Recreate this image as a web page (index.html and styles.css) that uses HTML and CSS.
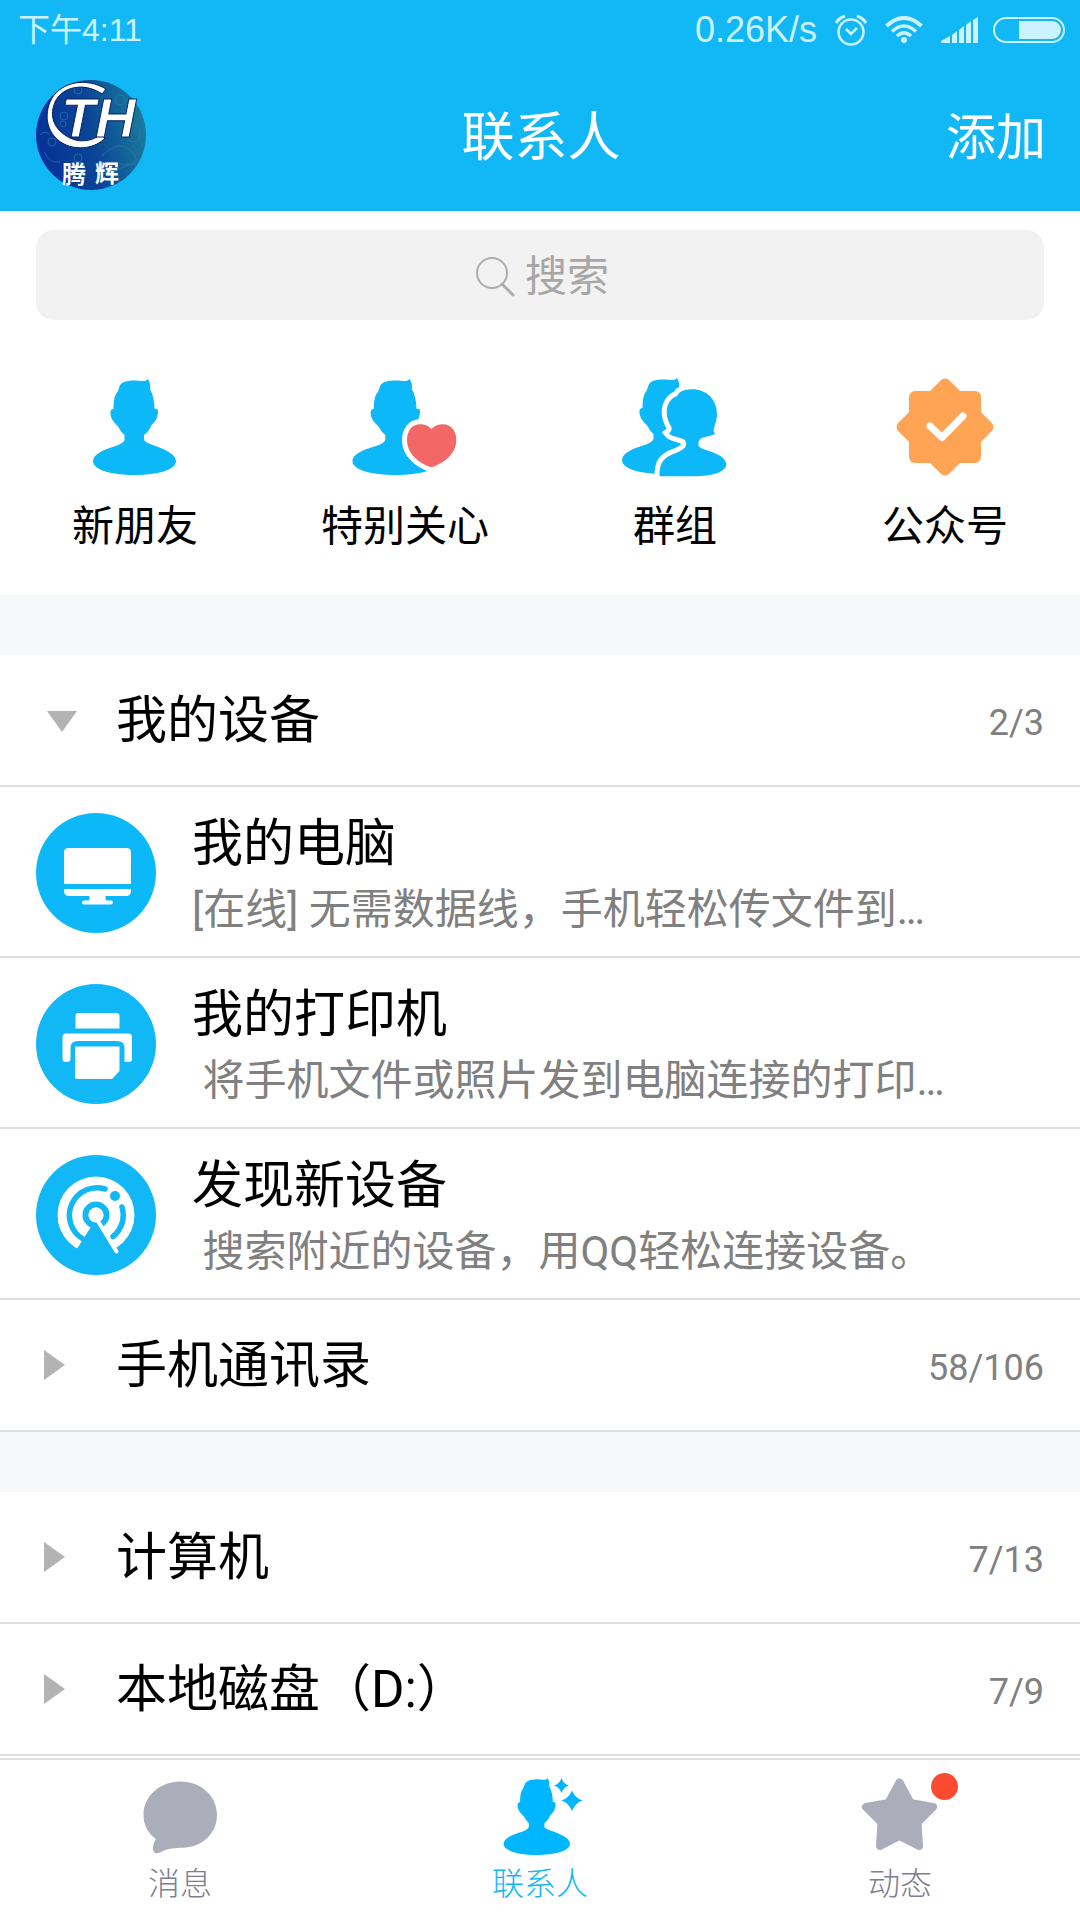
FILE: index.html
```html
<!DOCTYPE html>
<html lang="zh-CN">
<head>
  <meta charset="UTF-8" />
  <meta name="viewport" content="width=device-width, initial-scale=1.0"/>
  <title>联系人</title>
  <link rel="stylesheet" href="styles.css">
</head>
<body>
  <!-- shared shapes -->
  <svg class="defs" width="0" height="0" aria-hidden="true">
    <symbol id="person" viewBox="0 0 108 108" overflow="visible">
      <path d="M38 15C39 10 43 8 51 7.500C57 7 62 9 65 7.500L67 6C68 8 70 11 69 16.500C71 19 71 21 71.500 22C73 27 73.500 31 73.500 36C77 35 77.500 38 76.700 41C76 47 73 50 70.500 52C69 56 66 60 63 62V67C64 69 67 70 70.500 71.500C83 76 95 81 95 88C95 97 76 102 53.500 102S12 97 12 88C12 81 24 76 36 72.500C40 71 43 69 43.500 67V62C41 60 39 57 37.500 54C34 50 30 47 29.500 41C29 38 30 36 32.600 36C32.500 28 33.500 22 36.500 19Z"/>
    </symbol>
    <symbol id="arrow-right" viewBox="0 0 48 48">
      <path d="M8 9L29 24L8 39Z"/>
    </symbol>
    <symbol id="arrow-down" viewBox="0 0 48 48">
      <path d="M11 15H41L26 36Z"/>
    </symbol>
  </svg>

  <header class="top">
    <div class="status-bar">
      <span class="time">下午4:11</span>
      <span class="speed">0.26K/s</span>
      <svg width="32" height="32" viewBox="0 0 32 32" fill="none" stroke="currentColor" stroke-width="2.500">
        <circle cx="16" cy="18" r="12.500"/>
        <path d="M11 15L16 20L22 14"/>
        <path d="M1 9Q4 4 10 2M31 9Q28 4 22 2" stroke-width="3"/>
      </svg>
      <svg width="38" height="28" viewBox="0 0 38 28" fill="none" stroke="currentColor" stroke-width="4">
        <path d="M1.500 10Q19 -6 36.500 10"/>
        <path d="M7 15.500Q19 4.500 31 15.500" stroke-width="3.500"/>
        <path d="M12 20Q19 13.500 26 20" stroke-width="3.500"/>
        <circle cx="19" cy="24" r="3" fill="currentColor" stroke="none"/>
      </svg>
      <svg width="37" height="26" viewBox="0 0 37 26" fill="currentColor">
        <path d="M0 26V24L9 19V26ZM11 26V18L16 14V26ZM18 26V13L23 9V26ZM25 26V8L30 4V26ZM32 26V3L37 0V26Z"/>
      </svg>
      <svg class="battery" width="72" height="26" viewBox="0 0 72 26" fill="none">
        <rect x="1" y="1" width="70" height="24" rx="12" stroke="currentColor" stroke-width="2"/>
        <path d="M26 4H59A9 9 0 0 1 59 22H26Z" fill="currentColor"/>
      </svg>
    </div>
    <div class="title-bar">
      <a class="avatar" href="#me" aria-label="腾辉">
        <svg width="110" height="110" viewBox="0 0 110 110">
          <defs>
            <linearGradient id="sea" x1="0" y1="0.600" x2="1" y2="0.400">
              <stop offset="0" stop-color="#06309a"/>
              <stop offset="0.500" stop-color="#0a4595"/>
              <stop offset="1" stop-color="#1b7c9c"/>
            </linearGradient>
          </defs>
          <circle cx="55" cy="55" r="55" fill="url(#sea)"/>
          <g fill="none" stroke="#2f86ad" stroke-width="1" opacity="0.600">
            <circle cx="28" cy="36" r="4"/><circle cx="27" cy="44" r="3"/>
            <circle cx="42" cy="10" r="4"/><circle cx="16" cy="62" r="4"/>
            <circle cx="42" cy="78" r="4"/><circle cx="84" cy="20" r="5"/>
            <path d="M4 55Q8 50 14 54M8 72Q14 84 24 82M66 76Q84 58 96 72T84 84M92 46Q104 42 104 54T92 60M78 92Q90 84 100 84"/>
          </g>
          <!-- swoosh around the monogram -->
          <path d="M70 9C50 -3 26 2 16 18C6 36 12 56 28 64C42 71 60 68 69 58L64 55C56 61 44 63 34 58C18 50 12 36 20 20C30 4 52 4 66 14Z" fill="#fff" stroke="#06205e" stroke-width="1"/>
          <text class="monogram" x="25" y="57">TH</text>
          <text class="avatar-name" x="26" y="103">腾</text>
          <text class="avatar-name" x="59" y="102">辉</text>
        </svg>
      </a>
      <h1>联系人</h1>
      <button class="add-btn" type="button">添加</button>
    </div>
  </header>

  <main>
    <label class="search">
      <svg width="40" height="40" viewBox="0 0 40 40" fill="none" stroke="#adadad">
        <circle cx="17" cy="16" r="15" stroke-width="2"/>
        <path d="M27 27L38 38" stroke-width="3" stroke-linecap="round"/>
      </svg>
      <input type="text" placeholder="搜索" aria-label="搜索">
    </label>

    <nav class="shortcuts">
      <a href="#new">
        <svg width="108" height="108" viewBox="0 0 108 108" fill="#0db8f8">
          <use href="#person" width="108" height="108"/>
        </svg>
        新朋友
      </a>
      <a href="#care">
        <svg width="108" height="108" viewBox="0 0 108 108" fill="#0db8f8">
          <g transform="translate(-11 0) scale(1.040 1)"><use href="#person" width="108" height="108"/></g>
          <path d="M80.500 56.300C84 52 88 51.300 92 51.300C100 51.300 105.300 58 105.300 67C105.300 80 94 90 80.500 94.300C67 90 56 80 56 67C56 58 61 51.300 69 51.300C73 51.300 77 52 80.500 56.300Z" fill="#f36767" stroke="#fff" stroke-width="10" paint-order="stroke"/>
        </svg>
        特别关心
      </a>
      <a href="#groups">
        <svg width="108" height="108" viewBox="0 0 108 108" fill="#0db8f8">
          <g transform="translate(-11 -1)"><use href="#person" width="108" height="108"/></g>
          <!-- white keeps the back figure off the front one -->
          <path d="M58.500 19.500C62 17.500 66 16.300 71 16.300C86 16.300 96 27 96 41C96 47 94 51 93 55C92 58 93 60 94.300 60.300C92 63 85 63.500 81 65C79 66 78 67 77.500 69V73C80 76 86 77 91 79C99 82 105.300 86 105.300 91.500C105.300 99 90 103.300 74 103.300H38.500C38.500 90 42 86 50 82C58 79 65 76 65.300 71C65 66 62 66 58.500 64.700C54 63.500 50 63 48 60.300C50 59 51 57 50.500 54C48 50 46 46 45.700 40C45.500 31 50 25 56 23Z" stroke="#fff" stroke-width="10" paint-order="stroke"/>
        </svg>
        群组
      </a>
      <a href="#public">
        <svg width="108" height="108" viewBox="0 0 108 108" fill="#ffa455">
          <rect x="18" y="18" width="72" height="72" rx="6"/>
          <rect x="18" y="18" width="72" height="72" rx="6" transform="rotate(45 54 54)"/>
          <path d="M39 53L51 64.500L72 43" fill="none" stroke="#fff" stroke-width="7" stroke-linecap="round" stroke-linejoin="round"/>
        </svg>
        公众号
      </a>
    </nav>

    <section class="groups">
      <button class="group" type="button" aria-expanded="true">
        <svg class="arrow"><use href="#arrow-down"/></svg>
        <span class="group-name">我的设备</span>
        <span class="count">2/3</span>
      </button>
      <a class="device" href="#pc">
        <svg width="120" height="120" viewBox="0 0 120 120" fill="#fff">
          <circle cx="60" cy="60" r="60" fill="#0db8f8"/>
          <path d="M32.500 35H90.500Q95 35 95 39.500V71H28V39.500Q28 35 32.500 35ZM28 76H95V78Q95 83 90 83H69.500V86Q69.500 87.500 71 87.500H75Q77 87.500 77 89.500T75 91.500H48Q46 91.500 46 89.500T48 87.500H52Q53.500 87.500 53.500 86V83H33Q28 83 28 78Z"/>
        </svg>
        <span class="device-text">
          <span class="device-name">我的电脑</span>
          <span class="device-desc">[在线] 无需数据线，手机轻松传文件到…</span>
        </span>
      </a>
      <a class="device" href="#printer">
        <svg width="120" height="120" viewBox="0 0 120 120" fill="#fff">
          <circle cx="60" cy="60" r="60" fill="#12b7f5"/>
          <path d="M42.500 29H80.500Q83.500 29 83.500 32V44.500H39.500V32Q39.500 29 42.500 29Z"/>
          <path d="M30 49.500H92.500Q96 49.500 96 53V75Q96 78 93 78H88.500V64Q88.500 57 81 57H42Q34.500 57 34.500 64V75Q34.500 78 31 78H29.500Q26.500 78 26.500 75V53Q26.500 49.500 30 49.500Z"/>
          <path d="M39 62.500H83.500V87L76 95H41Q39 95 39 93Z"/>
        </svg>
        <span class="device-text">
          <span class="device-name">我的打印机</span>
          <span class="device-desc">&nbsp;将手机文件或照片发到电脑连接的打印…</span>
        </span>
      </a>
      <a class="device" href="#discover">
        <svg width="120" height="120" viewBox="0 0 120 120" fill="none" stroke="#12b7f5">
          <circle cx="60" cy="60" r="60" fill="#12b7f5" stroke="none"/>
          <circle cx="60" cy="60" r="38.500" fill="#fff" stroke="none"/>
          <path d="M69 34A27.500 27.500 0 0 0 47 84M86 52A27.500 27.500 0 0 1 77 81.500" stroke-width="5.500" stroke-linecap="round"/>
          <circle cx="60" cy="60" r="10.500" stroke-width="6"/>
          <circle cx="79" cy="41" r="5" fill="#12b7f5" stroke="none"/>
          <path d="M60 64L32 108H88Z" fill="#12b7f5" stroke="none"/>
          <circle cx="60" cy="60" r="7.500" fill="#fff" stroke="none"/>
          <path d="M62.500 67L80.500 96.500" stroke="#fff" stroke-width="4" stroke-linecap="round"/>
        </svg>
        <span class="device-text">
          <span class="device-name">发现新设备</span>
          <span class="device-desc">&nbsp;搜索附近的设备，用QQ轻松连接设备。</span>
        </span>
      </a>
      <button class="group" type="button" aria-expanded="false">
        <svg class="arrow"><use href="#arrow-right"/></svg>
        <span class="group-name">手机通讯录</span>
        <span class="count">58/106</span>
      </button>
    </section>

    <section class="groups">
      <button class="group" type="button" aria-expanded="false">
        <svg class="arrow"><use href="#arrow-right"/></svg>
        <span class="group-name">计算机</span>
        <span class="count">7/13</span>
      </button>
      <button class="group" type="button" aria-expanded="false">
        <svg class="arrow"><use href="#arrow-right"/></svg>
        <span class="group-name">本地磁盘（D:）</span>
        <span class="count">7/9</span>
      </button>
    </section>
  </main>

  <nav class="tab-bar">
    <a href="#messages">
      <svg width="80" height="80" viewBox="0 0 80 80" fill="#acadbb">
        <path d="M40.500 5.500C61 5.500 77 20 77 39C77 57 63 70 46 71.500C38 72 30 72 24 74.500C21 76 19 77.500 16 77.300C11 76 13 67 16 63C8 57 3.500 49 3.500 39C3.500 20 20 5.500 40.500 5.500Z"/>
      </svg>
      消息
    </a>
    <a class="active" href="#contacts" aria-current="page">
      <svg width="80" height="80" viewBox="0 0 80 80" fill="#00b6ff">
        <g transform="translate(-6 -2.600) scale(0.800)"><use href="#person" width="108" height="108"/></g>
        <path d="M61.500 2Q63.500 8 69 9.500Q63.500 11 61.500 17Q59.500 11 54 9.500Q59.500 8 61.500 2ZM72 14.500Q75 22 82.500 24.500Q75 27 72 35Q69 27 61.500 24.500Q69 22 72 14.500Z"/>
      </svg>
      联系人
    </a>
    <a href="#feed">
      <span class="tab-icon">
        <svg width="80" height="80" viewBox="0 0 80 80" fill="#acadbb" stroke="#acadbb" stroke-width="8" stroke-linejoin="round">
          <path d="M39.500 6.500L50.500 27L73 31L57.500 46.500L59 70L39.500 60L20 70L21.500 46.500L6 31L28.500 27Z"/>
        </svg>
        <i class="dot"></i>
      </span>
      动态
    </a>
  </nav>
</body>
</html>
```
FILE: styles.css
```css
* {
  box-sizing: border-box;
}
html, body {
  margin: 0;
  padding: 0;
}
body {
  min-height: 100vh;
  display: flex;
  flex-direction: column;
  font-family: Roboto, "Noto Sans CJK SC", sans-serif;
  font-size: 42px;
  line-height: 60px;
  background: #fff;
  color: #000;
}
a {
  color: inherit;
  text-decoration: none;
}
button {
  border: none;
  padding: 0;
  background: none;
  color: inherit;
  font: inherit;
  cursor: pointer;
}
svg {
  display: block;
  flex: none;
}
.defs {
  position: absolute;
}

/* header */
.top {
  background: #12b7f5;
  color: #fff;
}
.status-bar {
  display: flex;
  align-items: center;
  gap: 18px;
  height: 60px;
  padding: 0 15px 0 18px;
  font-family: "Liberation Sans", "Noto Sans CJK SC", sans-serif;
  font-size: 36px;
  color: #cdf2ff;
}
.time {
  margin-right: auto;
  font-size: 32px;
}
.battery {
  margin-left: -3px;
}
.title-bar {
  display: grid;
  grid-template-columns: 1fr auto 1fr;
  align-items: center;
  padding: 20px 34px 21px 36px;
}
.title-bar h1 {
  margin: 0;
  padding-top: 6px;
  font-size: 53px;
  font-weight: 400;
}
.avatar {
  justify-self: start;
}
.monogram {
  font: italic bold 56px "Liberation Sans", sans-serif;
  fill: #fff;
  stroke: #06205e;
  stroke-width: 1px;
}
.avatar-name {
  font: bold 24px "Noto Sans CJK SC", sans-serif;
  fill: #fff;
}
.add-btn {
  justify-self: end;
  padding-top: 6px;
  font-size: 50px;
}

/* search + shortcuts */
main {
  flex: 1;
}
.search {
  display: flex;
  align-items: center;
  justify-content: center;
  gap: 10px;
  height: 90px;
  margin: 19px 36px 0;
  padding: 4px 0 0 4px;
  border-radius: 18px;
  background: #f2f2f2;
}
.search input {
  width: 2em;
  border: none;
  padding: 0;
  outline: none;
  background: none;
  font: inherit;
}
.search input::placeholder {
  color: #a6a6a6;
  opacity: 1;
}
.shortcuts {
  display: grid;
  grid-template-columns: repeat(4, 1fr);
  padding: 53px 0 38px;
}
.shortcuts a {
  display: flex;
  flex-direction: column;
  align-items: center;
  gap: 16px;
}

/* contact groups */
.groups {
  border-top: 60px solid #f7f8fa;
}
.group, .device {
  display: flex;
  align-items: center;
  width: 100%;
  padding: 0 36px;
  border-bottom: 2px solid #dfdfdf;
}
.group {
  height: 132px;
  text-align: left;
}
.arrow {
  width: 48px;
  height: 48px;
  margin-right: 32px;
  fill: #b3b3b3;
}
.group-name {
  flex: 1;
  padding-top: 2px;
  font-size: 51px;
}
.count {
  padding-top: 6px;
  font-size: 36px;
  color: #808080;
}
.device {
  gap: 36px;
  height: 171px;
  padding-top: 2px;
}
.device-text {
  display: flex;
  flex-direction: column;
  min-width: 0;
  padding-top: 2px;
}
.device-name {
  font-size: 51px;
  line-height: 72px;
}
.device-desc {
  overflow: hidden;
  white-space: nowrap;
  text-overflow: ellipsis;
  color: #808080;
}

/* bottom tabs */
.tab-bar {
  position: sticky;
  bottom: 0;
  display: grid;
  grid-template-columns: repeat(3, 1fr);
  padding: 16px 0;
  border-top: 2px solid #dfe3e3;
  background: #fff;
  color: #7d7e91;
  font-size: 32px;
  font-weight: 300;
  line-height: 40px;
}
.tab-bar a {
  display: flex;
  flex-direction: column;
  align-items: center;
  gap: 8px;
}
.tab-bar svg {
  overflow: visible;
}
.tab-bar .active {
  color: #12b7f5;
}
.tab-icon {
  position: relative;
}
.dot {
  position: absolute;
  top: -3px;
  right: -18px;
  width: 27px;
  height: 27px;
  border-radius: 50%;
  background: #fa4b30;
}
```
